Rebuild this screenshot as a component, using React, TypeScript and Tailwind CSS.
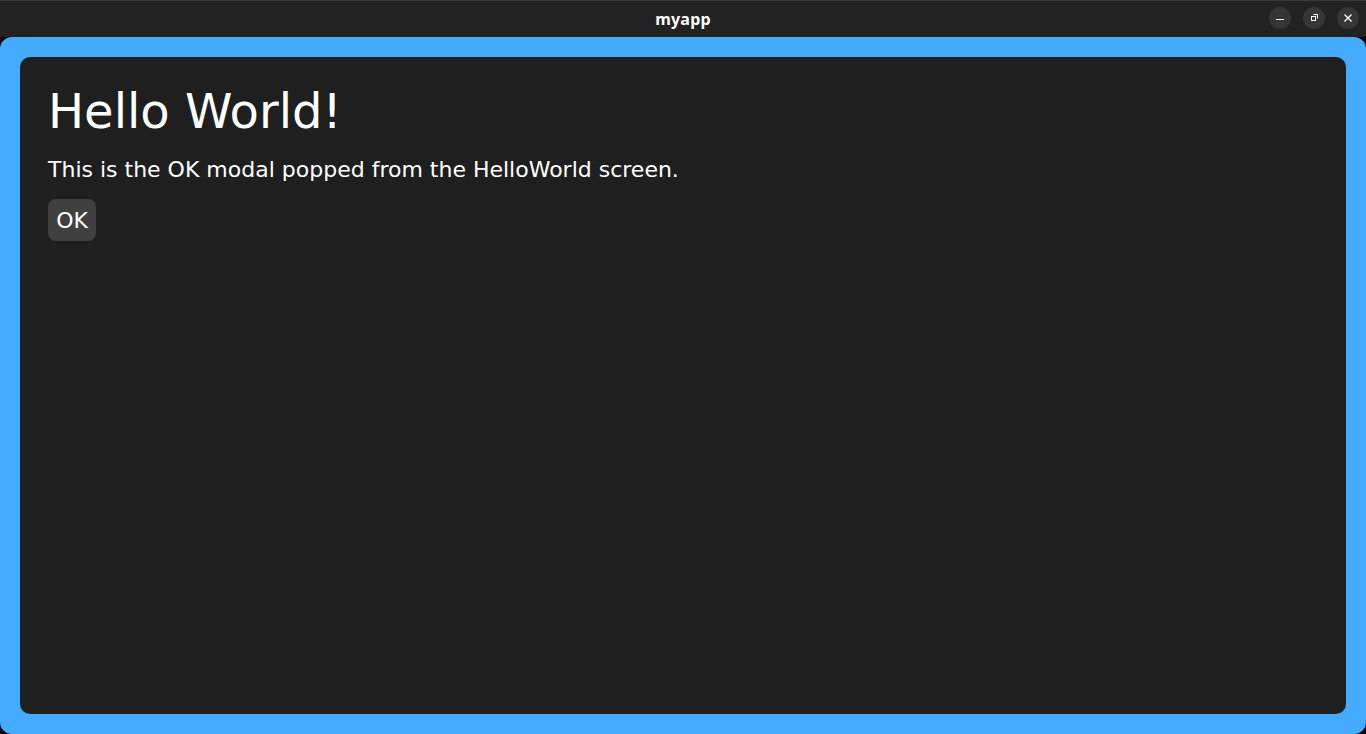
import React from 'react';

const TitleButton: React.FC<{ children: React.ReactNode }> = ({ children }) => (
    <div className="w-[22px] h-[22px] rounded-full bg-[#363636] flex items-center justify-center text-white">
        {children}
    </div>
);

export default function App() {
    return (
        <div className="w-[1366px] h-[734px] bg-black flex flex-col overflow-hidden" style={{ fontFamily: '"DejaVu Sans", sans-serif' }}>
            {/* Title bar */}
            <div className="h-[37px] bg-[#222222] border-t border-[#3a3a3a] relative flex items-center justify-center shrink-0">
                <span className="text-white font-bold text-[16px] tracking-[0.2px]" style={{ fontFamily: '"Noto Sans", "DejaVu Sans", sans-serif' }}>
                    myapp
                </span>
                <div className="absolute right-[7px] top-[6px] flex gap-[12px]">
                    <TitleButton>
                        <svg width="10" height="10" viewBox="0 0 10 10">
                            <rect x="1" y="6" width="8" height="1" fill="currentColor" />
                        </svg>
                    </TitleButton>
                    <TitleButton>
                        <svg width="10" height="10" viewBox="0 0 10 10" fill="none" stroke="currentColor" strokeWidth="1">
                            <rect x="2.5" y="3.5" width="4" height="4" />
                            <path d="M4.5 1.5h4v4" />
                        </svg>
                    </TitleButton>
                    <TitleButton>
                        <svg width="10" height="10" viewBox="0 0 10 10" stroke="currentColor" strokeWidth="1.3">
                            <path d="M1.5 1.5l7 7M8.5 1.5l-7 7" />
                        </svg>
                    </TitleButton>
                </div>
            </div>

            {/* Window body */}
            <div className="flex-1 bg-[#45abff] rounded-[12px] p-[20px] flex">
                <div className="flex-1 bg-[#1f1f1f] rounded-[10px] px-[28px] pt-[24px] text-white">
                    <h1 className="text-[48px] leading-[60px]">Hello World!</h1>
                    <p className="text-[22px] leading-[28px] mt-[15px]">
                        This is the OK modal popped from the HelloWorld screen.
                    </p>
                    <button className="mt-[15px] w-[48px] h-[42px] rounded-[8px] bg-[#404040] text-[22px] text-white flex items-center justify-center">
                        OK
                    </button>
                </div>
            </div>
        </div>
    );
}
